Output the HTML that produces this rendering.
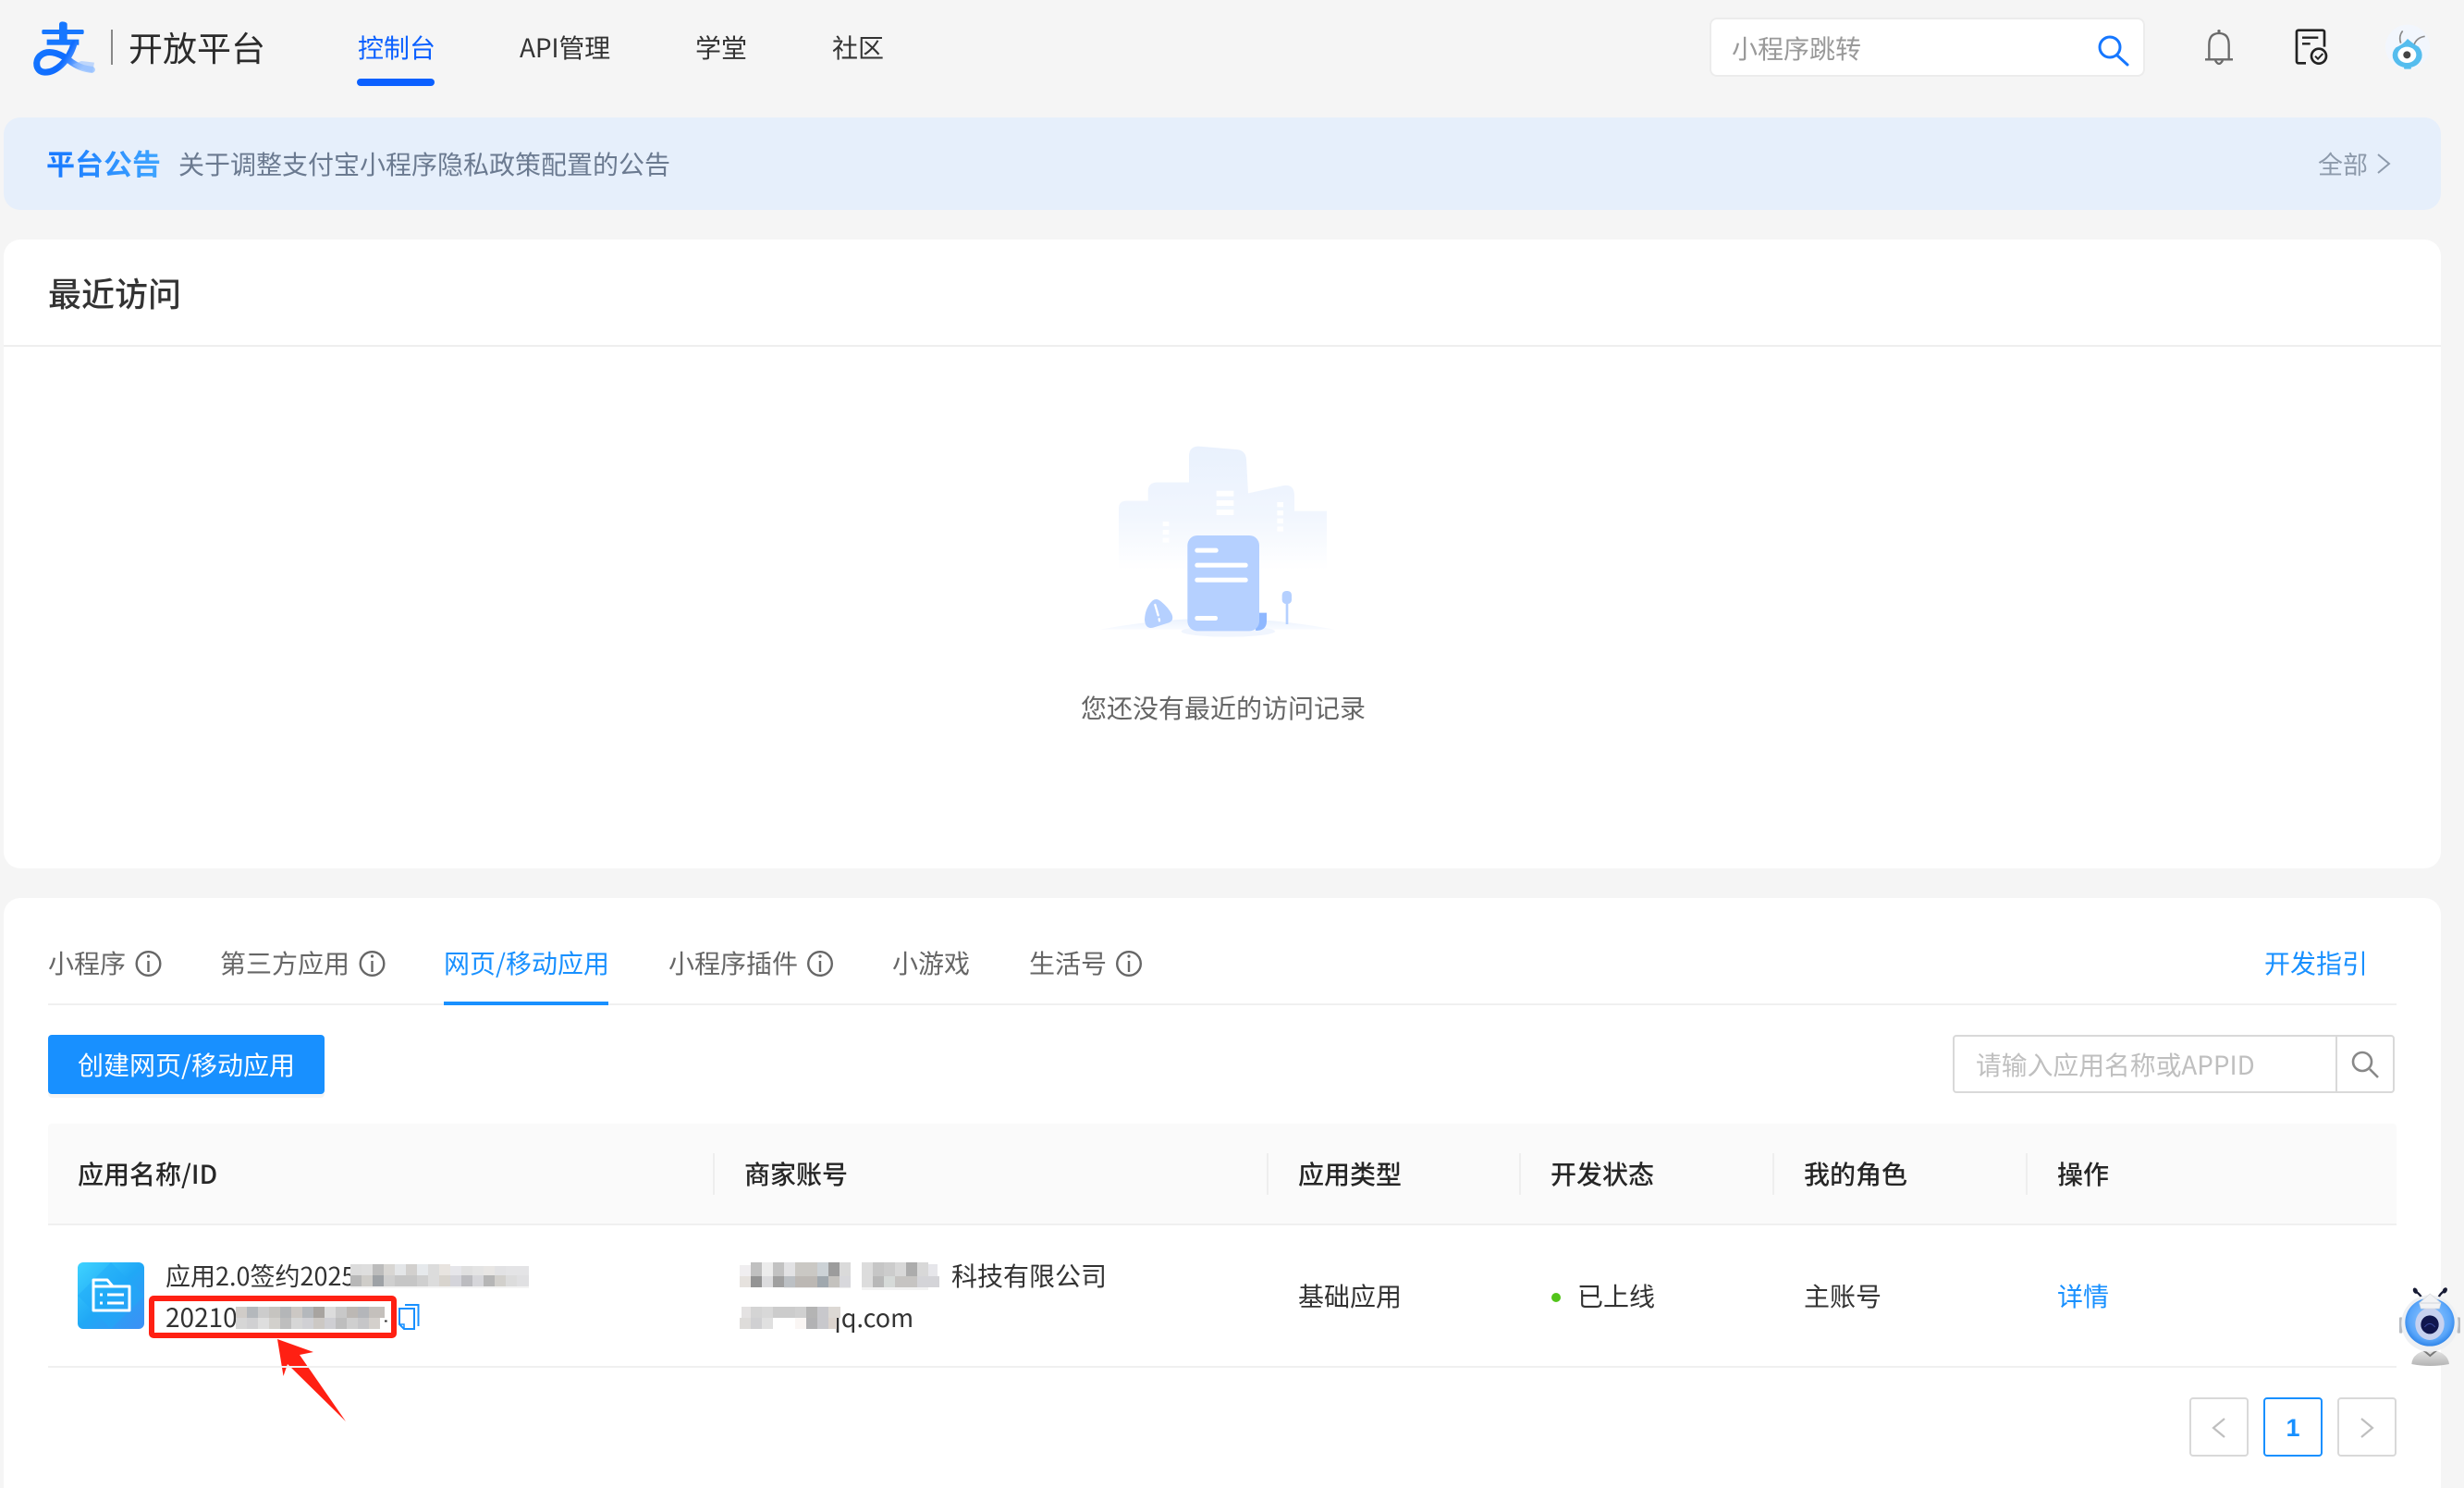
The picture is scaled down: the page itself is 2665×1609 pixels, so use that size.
<!DOCTYPE html>
<html lang="zh-CN"><head><meta charset="utf-8"><title>开放平台</title>
<style>
html,body{margin:0;padding:0;width:2665px;height:1609px;overflow:hidden;background:#f5f5f5}
body{position:relative;font-family:"Noto Sans CJK SC","Liberation Sans",sans-serif;color:#333}
.t{position:absolute;white-space:nowrap;line-height:40px;height:40px;font-size:28px}
.b{position:absolute;box-sizing:border-box}
svg{position:absolute;overflow:visible}
.h{font-weight:500;color:#262626}
.tab{color:#666}
.sep{position:absolute;width:2px;top:1247px;height:45px;background:#eee}
</style></head><body>

<!-- logo -->
<svg style="left:28px;top:16px" width="100" height="70" viewBox="0 0 300 210">
<defs><linearGradient id="lg" x1="0" y1="0" x2="1" y2="0.3"><stop offset="0" stop-color="#1677ff"/><stop offset=".6" stop-color="#0f6cff"/><stop offset="1" stop-color="#a8ccff"/></linearGradient></defs>
<rect x="52" y="48" width="136" height="15" rx="5" fill="#1677ff"/>
<path d="M108 32Q108 22 118 22Q134 22 134 32V82H108Z" fill="#1677ff"/>
<rect x="68" y="80" width="104" height="18" fill="#1677ff"/>
<path d="M156 94C140 150 95 190 58 186C32 183 28 150 46 133C75 107 120 130 150 155C175 172 195 176 214 178" fill="none" stroke="url(#lg)" stroke-width="21" stroke-linecap="round"/>
<path d="M180 150L222 155L216 187Q180 180 150 162Z" fill="#8fbcff" opacity=".55"/>
</svg>
<div class="b" style="left:120px;top:32px;width:2px;height:38px;background:#888"></div>
<div class="t" style="left:139px;top:30px;font-size:37px;color:#2b2b2b">开放平台</div>

<!-- nav -->
<div class="t" style="left:387px;top:31px;color:#0b60ff">控制台</div>
<div class="b" style="left:386px;top:85px;width:84px;height:8px;border-radius:4px;background:#0b60ff"></div>
<div class="t" style="left:562px;top:31px;letter-spacing:-.2px">API管理</div>
<div class="t" style="left:752px;top:31px">学堂</div>
<div class="t" style="left:900px;top:31px">社区</div>

<!-- top search -->
<div class="b" style="left:1849px;top:19px;width:471px;height:64px;background:#fff;border:2px solid #ececec;border-radius:8px"></div>
<div class="t" style="left:1873px;top:32px;color:#999">小程序跳转</div>
<svg style="left:2265px;top:35px" width="40" height="40" viewBox="0 0 40 40"><circle cx="17" cy="16" r="11" fill="none" stroke="#1677ff" stroke-width="3"/><path d="M25 25L36 35" stroke="#1677ff" stroke-width="3" stroke-linecap="round"/></svg>

<!-- header icons -->
<svg style="left:2370px;top:20px" width="270" height="64" viewBox="0 0 810 192">
<path d="M58 132V85Q58 48 90 48Q122 48 122 85V132M45 133H135M78 136Q90 158 102 136" fill="none" stroke="#6a6a6a" stroke-width="7"/>
<circle cx="90" cy="41" r="5" fill="#6a6a6a"/>
<path d="M372 145H348a6 6 0 0 1-6-6V44a6 6 0 0 1 6-6H426a6 6 0 0 1 6 6V92" fill="none" stroke="#222" stroke-width="8"/>
<path d="M360 62H412M360 82H386" stroke="#222" stroke-width="7"/>
<circle cx="414" cy="122" r="24" fill="#f5f5f5" stroke="#222" stroke-width="8"/>
<path d="M402 122l9 9l16-17" fill="none" stroke="#222" stroke-width="6"/>
<circle cx="702" cy="92" r="72" fill="#f2f6fd"/>
<path d="M680 80Q672 58 686 40M722 88Q730 62 758 58" fill="none" stroke="#8a8a8a" stroke-width="5"/>
<path d="M702 66Q720 82 738 92Q752 108 748 128Q738 158 702 160Q664 158 654 128Q650 108 664 94Q688 84 702 66Z" fill="#55bdee"/>
<rect x="690" y="158" width="24" height="6" rx="3" fill="#55bdee"/>
<ellipse cx="700" cy="118" rx="30" ry="26" fill="#fff"/>
<circle cx="700" cy="118" r="12" fill="#444"/>
</svg>

<!-- banner -->
<div class="b" style="left:4px;top:127px;width:2636px;height:100px;background:#e6effb;border-radius:18px"></div>
<div class="t" style="left:50px;top:156px;font-size:31px;font-weight:700;background:linear-gradient(90deg,#1677ff,#3fa5ff);-webkit-background-clip:text;background-clip:text;color:transparent">平台公告</div>
<div class="t" style="left:193px;top:157px;color:#6b7a90">关于调整支付宝小程序隐私政策配置的公告</div>
<div class="t" style="left:2507px;top:157px;font-size:27px;color:#8d9aab">全部</div>
<svg style="left:2570px;top:165px" width="18" height="24" viewBox="0 0 18 24"><path d="M2 2L14 12L2 22" fill="none" stroke="#8d9aab" stroke-width="2"/></svg>

<!-- recent card -->
<div class="b" style="left:4px;top:259px;width:2636px;height:680px;background:#fff;border-radius:18px"></div>
<div class="t" style="left:52px;top:296px;font-size:36px;font-weight:500;color:#333">最近访问</div>
<div class="b" style="left:4px;top:373px;width:2636px;height:2px;background:#eeeeee"></div>

<svg style="left:1150px;top:460px" width="360" height="340" viewBox="0 0 1080 1020">
<defs>
<linearGradient id="bd" x1="0" y1="0" x2="0" y2="1"><stop offset="0" stop-color="#e9f1fd"/><stop offset=".55" stop-color="#f1f6fe"/><stop offset="1" stop-color="#fff"/></linearGradient>
<linearGradient id="gr" x1="0" y1="0" x2="0" y2="1"><stop offset="0" stop-color="#eaf2fe"/><stop offset="1" stop-color="#f9fbff"/></linearGradient>
</defs>
<path d="M180 470V270Q180 245 205 245H275V215Q275 185 305 185H408V100Q408 68 440 68L560 78Q592 80 594 110L600 220L715 195Q748 190 750 225V278H855V470Z" fill="url(#bd)"/>
<g fill="#fff"><rect x="497" y="212" width="56" height="18"/><rect x="497" y="243" width="56" height="18"/><rect x="497" y="273" width="56" height="18"/>
<rect x="694" y="249" width="20" height="16"/><rect x="694" y="276" width="20" height="16"/><rect x="694" y="302" width="20" height="16"/><rect x="694" y="328" width="20" height="16"/>
<rect x="323" y="312" width="20" height="15"/><rect x="323" y="339" width="20" height="15"/><rect x="323" y="365" width="20" height="15"/></g>
<path d="M120 662Q500 590 880 662Z" fill="url(#gr)"/>
<ellipse cx="535" cy="668" rx="152" ry="18" fill="#f0f5fe"/>
<path d="M620 640V608H660V635Q660 666 625 666Z" fill="#8fb8ff"/>
<rect x="403" y="357" width="233" height="310" rx="32" fill="#b5d0ff"/>
<g fill="#fff"><rect x="427" y="398" width="76" height="15" rx="7"/><rect x="427" y="446" width="172" height="15" rx="7"/><rect x="427" y="494" width="172" height="15" rx="7"/><rect x="427" y="618" width="74" height="15" rx="7"/></g>
<path d="M290 568Q302 558 318 572Q340 590 352 612Q362 636 336 642L292 656Q266 662 264 630Q266 590 290 568Z" fill="#b5d0ff"/>
<path d="M298 582L308 616M311 628L312 634" stroke="#fff" stroke-width="7" stroke-linecap="round"/>
<rect x="710" y="537" width="31" height="42" rx="13" fill="#b5d0ff"/>
<rect x="722" y="575" width="8" height="70" fill="#b5d0ff"/>
</svg>
<div class="t" style="left:1169px;top:745px;color:#666">您还没有最近的访问记录</div>

<!-- apps card -->
<div class="b" style="left:4px;top:971px;width:2636px;height:660px;background:#fff;border-radius:18px"></div>

<div class="t tab" style="left:52px;top:1021px">小程序</div>
<div class="t tab" style="left:238px;top:1021px">第三方应用</div>
<div class="t" style="left:480px;top:1021px;color:#1890ff">网页/移动应用</div>
<div class="t tab" style="left:723px;top:1021px">小程序插件</div>
<div class="t tab" style="left:965px;top:1021px">小游戏</div>
<div class="t tab" style="left:1113px;top:1021px">生活号</div>
<div class="t" style="left:2449px;top:1021px;color:#1890ff">开发指引</div>

<svg style="left:0;top:1020px" width="1300" height="44" viewBox="0 0 1300 44" fill="none" stroke="#666" stroke-width="2.4">
<circle cx="160.5" cy="22" r="12.8"/><path d="M160.5 19V31" stroke-width="2.4"/><circle cx="160.5" cy="14" r="1.6" fill="#666" stroke="none"/>
<circle cx="402.5" cy="22" r="12.8"/><path d="M402.5 19V31" stroke-width="2.4"/><circle cx="402.5" cy="14" r="1.6" fill="#666" stroke="none"/>
<circle cx="887" cy="22" r="12.8"/><path d="M887 19V31" stroke-width="2.4"/><circle cx="887" cy="14" r="1.6" fill="#666" stroke="none"/>
<circle cx="1221" cy="22" r="12.8"/><path d="M1221 19V31" stroke-width="2.4"/><circle cx="1221" cy="14" r="1.6" fill="#666" stroke="none"/>
</svg>

<div class="b" style="left:52px;top:1085px;width:2540px;height:2px;background:#f0f0f0"></div>
<div class="b" style="left:480px;top:1083px;width:178px;height:4px;background:#1890ff"></div>

<div class="b" style="left:52px;top:1119px;width:299px;height:64px;background:#1890ff;border-radius:4px;box-shadow:0 4px 0 #f5f5f5"></div>
<div class="t" style="left:84px;top:1131px;color:#fff">创建网页/移动应用</div>

<div class="b" style="left:2112px;top:1119px;width:478px;height:63px;border:2px solid #d9d9d9;border-radius:4px;background:#fff"></div>
<div class="b" style="left:2526px;top:1119px;width:2px;height:63px;background:#d9d9d9"></div>
<div class="t" style="left:2137px;top:1131px;color:#bfbfbf;font-size:27.8px">请输入应用名称或APPID</div>
<svg style="left:2540px;top:1134px" width="36" height="34" viewBox="0 0 36 34"><circle cx="15" cy="14" r="10" fill="none" stroke="#888" stroke-width="2.6"/><path d="M23 22L32 31" stroke="#888" stroke-width="2.6"/></svg>

<!-- table head -->
<div class="b" style="left:52px;top:1215px;width:2540px;height:108px;background:#fafafa;border-radius:4px 4px 0 0"></div>
<div class="b" style="left:52px;top:1323px;width:2540px;height:2px;background:#f0f0f0"></div>
<div class="sep" style="left:771px"></div><div class="sep" style="left:1370px"></div><div class="sep" style="left:1643px"></div><div class="sep" style="left:1917px"></div><div class="sep" style="left:2191px"></div>
<div class="t h" style="left:84px;top:1249px">应用名称/ID</div>
<div class="t h" style="left:805px;top:1249px">商家账号</div>
<div class="t h" style="left:1404px;top:1249px">应用类型</div>
<div class="t h" style="left:1677px;top:1249px">开发状态</div>
<div class="t h" style="left:1951px;top:1249px">我的角色</div>
<div class="t h" style="left:2225px;top:1249px">操作</div>

<!-- row -->
<svg style="left:84px;top:1365px" width="72" height="72" viewBox="0 0 72 72">
<defs><linearGradient id="ic" x1="0" y1="0" x2="1" y2="1"><stop offset="0" stop-color="#3fd3ff"/><stop offset=".5" stop-color="#20a8f6"/><stop offset="1" stop-color="#3d8ff5"/></linearGradient></defs>
<rect width="72" height="72" rx="6" fill="url(#ic)"/>
<path d="M36 0L72 36L36 72L0 36Z" fill="#1fa9f7" opacity=".5"/>
<path d="M17 19H32L38 26H56V52H17Z" fill="none" stroke="#fff" stroke-width="3" stroke-linejoin="round"/>
<path d="M17 26H38" stroke="#fff" stroke-width="3"/>
<path d="M24 35H27M32 35H50M24 44H27M32 44H50" stroke="#fff" stroke-width="3"/>
</svg>
<div class="t" style="left:179px;top:1359px;font-size:27px">应用2.0签约2025</div>
<svg style="left:379px;top:1367px" width="194" height="26" viewBox="0 0 194 26" shape-rendering="crispEdges">
<rect width="193" height="26" fill="#fff"/>
<rect x="0" y="0" width="12" height="12" fill="#dcdcdc"/><rect x="12" y="0" width="12" height="12" fill="#dedede"/><rect x="24" y="0" width="12" height="12" fill="#bcbcbc"/><rect x="36" y="0" width="12" height="12" fill="#d8d6d3"/><rect x="48" y="0" width="12" height="12" fill="#e4e6e8"/><rect x="60" y="0" width="12" height="12" fill="#d2d0ce"/><rect x="72" y="0" width="12" height="12" fill="#e6e9ec"/><rect x="84" y="0" width="12" height="12" fill="#dcdcdc"/><rect x="96" y="0" width="12" height="12" fill="#e8e4e0"/><rect x="108" y="2" width="12" height="10" fill="#e6e6ea"/><rect x="120" y="2" width="12" height="10" fill="#e0e0e0"/><rect x="132" y="2" width="12" height="10" fill="#e4e4e4"/><rect x="144" y="2" width="12" height="10" fill="#e8e6e4"/><rect x="156" y="2" width="12" height="10" fill="#e2e2e4"/><rect x="168" y="2" width="25" height="10" fill="#e4e4e6"/>
<rect x="0" y="12" width="12" height="12" fill="#b8b8b8"/><rect x="12" y="12" width="12" height="12" fill="#cfcdc9"/><rect x="24" y="12" width="12" height="12" fill="#9ea2a6"/><rect x="36" y="12" width="12" height="12" fill="#cfcfcf"/><rect x="48" y="12" width="24" height="12" fill="#c6c6c6"/><rect x="72" y="12" width="12" height="12" fill="#cfcfcf"/><rect x="84" y="12" width="12" height="12" fill="#dcdcdc"/><rect x="96" y="12" width="12" height="12" fill="#d8d4ce"/><rect x="108" y="12" width="12" height="12" fill="#d4d4da"/><rect x="120" y="12" width="12" height="12" fill="#bcbcc0"/><rect x="132" y="12" width="12" height="12" fill="#d6d6da"/><rect x="144" y="12" width="12" height="12" fill="#b6b6b6"/><rect x="156" y="12" width="12" height="12" fill="#d2d0cc"/><rect x="168" y="12" width="12" height="12" fill="#dcdcdc"/><rect x="180" y="12" width="13" height="12" fill="#e0e0e2"/>
<rect x="0" y="24" width="193" height="2" fill="#f4f4f4"/>
</svg>

<div class="t" style="left:179px;top:1404px">20210</div>
<div class="t" style="left:404px;top:1404px">4</div>
<svg style="left:255px;top:1413px" width="161" height="24" viewBox="0 0 161 24" shape-rendering="crispEdges">
<rect width="161" height="24" fill="#fff"/>
<rect x="0" y="0" width="12" height="12" fill="#d0ccc8"/><rect x="12" y="0" width="12" height="12" fill="#b4b8bc"/><rect x="24" y="0" width="12" height="12" fill="#cccccc"/><rect x="36" y="0" width="12" height="12" fill="#c6c4c0"/><rect x="48" y="0" width="12" height="12" fill="#b4b6b8"/><rect x="60" y="0" width="12" height="12" fill="#ccc8c4"/><rect x="72" y="0" width="12" height="12" fill="#b4b8bc"/><rect x="84" y="0" width="12" height="12" fill="#a8a4a0"/><rect x="96" y="0" width="12" height="12" fill="#dcdcdc"/><rect x="108" y="0" width="12" height="12" fill="#c8c8c8"/><rect x="120" y="0" width="12" height="12" fill="#bcb8b4"/><rect x="132" y="0" width="12" height="12" fill="#b4b6ba"/><rect x="144" y="0" width="17" height="12" fill="#c4c0bc"/>
<rect x="0" y="12" width="12" height="12" fill="#d6d6d6"/><rect x="12" y="12" width="12" height="12" fill="#d0d0d2"/><rect x="24" y="12" width="12" height="12" fill="#dedede"/><rect x="36" y="12" width="12" height="12" fill="#d2d0cc"/><rect x="48" y="12" width="12" height="12" fill="#bebebe"/><rect x="60" y="12" width="12" height="12" fill="#d6d6d6"/><rect x="72" y="12" width="12" height="12" fill="#d0d0d4"/><rect x="84" y="12" width="12" height="12" fill="#ccc8c4"/><rect x="96" y="12" width="12" height="12" fill="#cfcfd3"/><rect x="108" y="12" width="12" height="12" fill="#bebebe"/><rect x="120" y="12" width="12" height="12" fill="#cfcfcf"/><rect x="132" y="12" width="12" height="12" fill="#c6c6c8"/><rect x="144" y="12" width="12" height="12" fill="#d4d0cc"/>
</svg>
<div class="b" style="left:161px;top:1401px;width:268px;height:46px;border:6px solid #ff2013;border-radius:5px"></div>
<svg style="left:431px;top:1410px" width="23" height="29" viewBox="0 0 23 29" fill="none" stroke="#1890ff" stroke-width="2"><path d="M7 1H21.5V24"/><path d="M1 5H17V27H6L1 22Z"/><path d="M1 22H6V27" stroke-width="1.5"/></svg>
<svg style="left:0;top:0" width="2665" height="1609" viewBox="0 0 2665 1609"><path d="M300 1448L339 1462L324 1465L374 1537L311 1475L306.5 1488Z" fill="#ff2013"/></svg>
<div class="b" style="left:52px;top:1477px;width:2540px;height:2px;background:#f0f0f0"></div>

<div class="t" style="left:893px;top:1404px;font-size:27px">qq.com</div>
<svg style="left:800px;top:1365px" width="216" height="72" viewBox="0 0 216 72" shape-rendering="crispEdges">
<rect x="0" y="3" width="12" height="12" fill="#f0eef0"/><rect x="12" y="0" width="12" height="15" fill="#c0c0c0"/><rect x="24" y="0" width="12" height="15" fill="#ececec"/><rect x="36" y="0" width="12" height="15" fill="#c2c2c2"/><rect x="48" y="0" width="12" height="15" fill="#e2e2e4"/><rect x="60" y="0" width="24" height="15" fill="#cac8c4"/><rect x="84" y="0" width="12" height="15" fill="#ccd2d6"/><rect x="96" y="0" width="12" height="15" fill="#9c9c9c"/><rect x="108" y="0" width="12" height="15" fill="#dadada"/>
<rect x="0" y="15" width="12" height="12" fill="#e6e2de"/><rect x="12" y="15" width="12" height="12" fill="#949494"/><rect x="24" y="15" width="12" height="12" fill="#dcdcde"/><rect x="36" y="15" width="12" height="12" fill="#a0a0a0"/><rect x="48" y="15" width="12" height="12" fill="#bcc0c4"/><rect x="60" y="15" width="24" height="12" fill="#bcb8b4"/><rect x="84" y="15" width="12" height="12" fill="#a0a8ae"/><rect x="96" y="15" width="12" height="12" fill="#c4c2be"/><rect x="108" y="15" width="12" height="12" fill="#d8d8dc"/>
<rect x="48" y="27" width="72" height="1" fill="#eeeeee"/>
<rect x="132" y="0" width="12" height="15" fill="#dcdcdc"/><rect x="144" y="0" width="12" height="15" fill="#c6c6c6"/><rect x="156" y="0" width="12" height="15" fill="#cccccc"/><rect x="168" y="0" width="12" height="15" fill="#d8d8d8"/><rect x="180" y="0" width="12" height="15" fill="#acacac"/><rect x="192" y="0" width="12" height="15" fill="#d8d8d8"/><rect x="204" y="2" width="10" height="13" fill="#e6e6ea"/>
<rect x="132" y="15" width="12" height="12" fill="#dcdcdc"/><rect x="144" y="15" width="12" height="12" fill="#b8b8b8"/><rect x="156" y="15" width="12" height="12" fill="#d6dad8"/><rect x="168" y="15" width="24" height="12" fill="#c6c4c2"/><rect x="192" y="15" width="24" height="12" fill="#d4d4d8"/>
<rect x="132" y="27" width="72" height="3" fill="#f2f2f2"/>
<rect x="2" y="48" width="10" height="12" fill="#e4e2e2"/><rect x="12" y="48" width="12" height="12" fill="#d4d4d4"/><rect x="24" y="48" width="12" height="12" fill="#d8d8d8"/><rect x="36" y="48" width="24" height="12" fill="#cccccc"/><rect x="60" y="48" width="12" height="12" fill="#d0d0d0"/><rect x="72" y="48" width="12" height="12" fill="#b4b4b4"/><rect x="84" y="48" width="12" height="12" fill="#c8c8cc"/><rect x="96" y="48" width="13" height="12" fill="#dcd8d4"/>
<rect x="0" y="60" width="12" height="12" fill="#dedcda"/><rect x="12" y="60" width="12" height="12" fill="#d0d0d2"/><rect x="24" y="60" width="12" height="12" fill="#e0e0e0"/><rect x="36" y="60" width="24" height="12" fill="#fff"/><rect x="60" y="60" width="12" height="12" fill="#faf6f4"/><rect x="72" y="60" width="12" height="12" fill="#b2b2b4"/><rect x="84" y="60" width="12" height="12" fill="#c8c8cc"/><rect x="96" y="60" width="9" height="12" fill="#dcd4ce"/>
</svg>
<div class="t" style="left:1029px;top:1359px">科技有限公司</div>

<div class="t" style="left:1404px;top:1381px">基础应用</div>
<div class="b" style="left:1678px;top:1398px;width:10px;height:10px;border-radius:50%;background:#52c41a"></div>
<div class="t" style="left:1706px;top:1381px">已上线</div>
<div class="t" style="left:1951px;top:1381px">主账号</div>
<div class="t" style="left:2225px;top:1381px;color:#1890ff">详情</div>

<!-- pagination -->
<div class="b" style="left:2368px;top:1511px;width:64px;height:64px;border:2px solid #d9d9d9;border-radius:4px"></div>
<div class="b" style="left:2448px;top:1511px;width:64px;height:64px;border:2px solid #1890ff;border-radius:4px"></div>
<div class="b" style="left:2528px;top:1511px;width:64px;height:64px;border:2px solid #d9d9d9;border-radius:4px"></div>
<div class="t" style="left:2448px;width:64px;text-align:center;top:1524px;color:#1890ff;font-family:'Liberation Sans',sans-serif;font-weight:700;font-size:27px">1</div>
<svg style="left:2368px;top:1511px" width="224" height="64" viewBox="0 0 224 64" fill="none" stroke="#bfbfbf" stroke-width="2.2"><path d="M38 23L26 33L38 43"/><path d="M186 23L198 33L186 43"/></svg>

<!-- robot -->
<svg style="left:2585px;top:1385px" width="80" height="100" viewBox="0 0 240 300">
<defs>
<radialGradient id="rb" cx=".5" cy=".45" r=".6"><stop offset="0" stop-color="#9accff"/><stop offset=".7" stop-color="#5aa6fa"/><stop offset="1" stop-color="#1f78e2"/></radialGradient>
<linearGradient id="rg" x1="0" y1="0" x2="0" y2="1"><stop offset="0" stop-color="#e8e8e8"/><stop offset="1" stop-color="#b4b4b4"/></linearGradient>
</defs>
<path d="M82 34Q98 42 106 62" fill="none" stroke="#181c35" stroke-width="7"/><ellipse cx="82" cy="32" rx="7" ry="10" fill="#181c35" transform="rotate(-25 82 32)"/>
<path d="M180 32Q162 38 154 62" fill="none" stroke="#181c35" stroke-width="7"/><ellipse cx="178" cy="31" rx="7" ry="10" fill="#181c35" transform="rotate(30 178 31)"/>
<rect x="30" y="118" width="10" height="52" rx="3" fill="#b8bcc2"/><rect x="218" y="118" width="10" height="52" rx="3" fill="#b8bcc2"/>
<path d="M70 270Q72 232 130 222Q188 232 192 270Q130 282 70 270Z" fill="url(#rg)"/>
<path d="M110 226L130 243L150 226" fill="none" stroke="#777" stroke-width="6"/>
<ellipse cx="129" cy="138" rx="92" ry="92" fill="#eef0f3"/>
<ellipse cx="129" cy="134" rx="80" ry="78" fill="url(#rb)"/>
<ellipse cx="129" cy="140" rx="47" ry="52" fill="#c6d1ef"/>
<ellipse cx="129" cy="142" rx="29" ry="30" fill="#10164e"/>
<path d="M112 150Q129 128 146 150" fill="none" stroke="#3a4aa0" stroke-width="3"/>
<path d="M130 42L165 72L160 90H100L95 72Z" fill="#f2f3f5" stroke="#d6d8dc" stroke-width="2"/>
<path d="M98 72H162" stroke="#c8ccd2" stroke-width="2"/>
</svg>

</body></html>
